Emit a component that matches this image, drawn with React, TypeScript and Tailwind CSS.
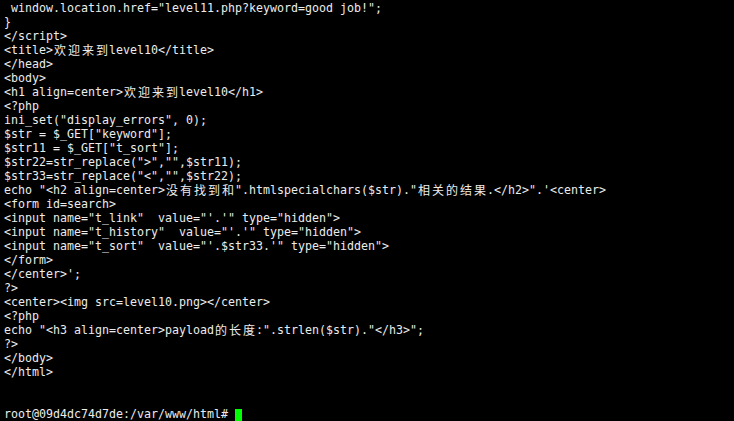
import React from 'react';

const lines: string[] = [
  ' window.location.href="level11.php?keyword=good job!";',
  '}',
  '</script>',
  '<title>欢迎来到level10</title>',
  '</head>',
  '<body>',
  '<h1 align=center>欢迎来到level10</h1>',
  '<?php',
  'ini_set("display_errors", 0);',
  '$str = $_GET["keyword"];',
  '$str11 = $_GET["t_sort"];',
  '$str22=str_replace(">","",$str11);',
  '$str33=str_replace("<","",$str22);',
  'echo "<h2 align=center>没有找到和".htmlspecialchars($str)."相关的结果.</h2>".\'<center>',
  '<form id=search>',
  '<input name="t_link"  value="\'.\'" type="hidden">',
  '<input name="t_history"  value="\'.\'" type="hidden">',
  '<input name="t_sort"  value="\'.$str33.\'" type="hidden">',
  '</form>',
  '</center>\';',
  '?>',
  '<center><img src=level10.png></center>',
  '<?php',
  'echo "<h3 align=center>payload的长度:".strlen($str)."</h3>";',
  '?>',
  '</body>',
  '</html>',
  '',
  '',
];

const isWide = (ch: string) => /[\u3000-\u9fff\uff00-\uffef]/.test(ch);

// split a line into ascii runs and double-width cells
const Line: React.FC<{ text: string }> = ({ text }) => {
  const parts: React.ReactNode[] = [];
  let buf = '';
  Array.from(text).forEach((ch, i) => {
    if (isWide(ch)) {
      if (buf) {
        parts.push(<span key={`a${i}`}>{buf}</span>);
        buf = '';
      }
      parts.push(
        <span
          key={`w${i}`}
          className="inline-block w-[14px] text-center text-[12px] font-['Noto_Sans_CJK_SC',sans-serif] leading-[14px] align-top"
        >
          {ch}
        </span>
      );
    } else {
      buf += ch;
    }
  });
  if (buf) parts.push(<span key="end">{buf}</span>);
  return <div className="h-[14px] whitespace-pre">{parts}</div>;
};

const App: React.FC = () => {
  return (
    <div className="w-[734px] h-[421px] overflow-hidden bg-black text-[#ececec] pl-[4px] pt-[1px] font-['DejaVu_Sans_Mono',monospace] text-[11.63px] leading-[14px]">
      {lines.map((l, i) => (
        <Line key={i} text={l} />
      ))}
      <div className="h-[14px] whitespace-pre flex items-center">
        <span>root@09d4dc74d7de:/var/www/html# </span>
        <span className="inline-block w-[7px] h-[12px] bg-[#00ff00] mt-[1px]" />
      </div>
    </div>
  );
};

export default App;
